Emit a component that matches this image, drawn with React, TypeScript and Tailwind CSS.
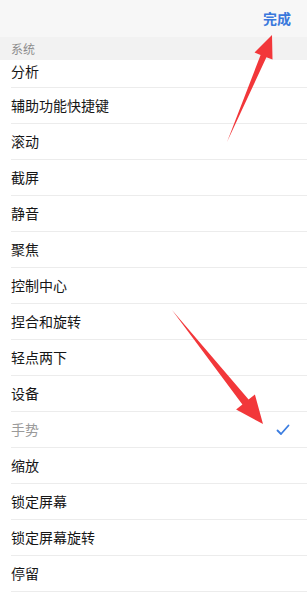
import React from "react";

const items = [
  "辅助功能快捷键",
  "滚动",
  "截屏",
  "静音",
  "聚焦",
  "控制中心",
  "捏合和旋转",
  "轻点两下",
  "设备",
  "手势",
  "缩放",
  "锁定屏幕",
  "锁定屏幕旋转",
  "停留",
];

const Check = () => (
  <svg width="14" height="12" viewBox="0 0 14 12" className="mr-[17px]">
    <polyline points="1.5,6.5 5,10 12.5,1.5" fill="none" stroke="#3b7de0" strokeWidth="1.8" strokeLinecap="round" strokeLinejoin="round" />
  </svg>
);

const Row: React.FC<{ label: string; selected?: boolean }> = ({ label, selected }) => (
  <div className="bg-white pl-[11px]">
    <div className="h-9 flex items-center justify-between border-b border-[#ececec]">
      <span className={`text-[14px] ${selected ? "text-[#9a9a9a]" : "text-[#161616]"}`}>{label}</span>
      {selected && <Check />}
    </div>
  </div>
);

export default function App() {
  return (
    <div
      className="relative w-[307px] h-[600px] overflow-hidden bg-white"
      style={{ fontFamily: '"Noto Sans CJK SC", "Noto Sans", sans-serif' }}
    >
      <div className="h-[37px] bg-[#f7f7f7] flex items-center justify-end pr-4">
        <span className="text-[14px] font-bold text-[#3a78dc]">完成</span>
      </div>
      <div className="h-[23px] bg-[#f2f2f2] flex items-center pl-[11px]">
        <span className="text-[12px] text-[#8c8c8c]">系统</span>
      </div>
      <div className="bg-white pl-[11px]">
        <div className="h-7 leading-5 border-b border-[#ececec]">
          <span className="text-[14px] text-[#161616]">分析</span>
        </div>
      </div>
      {items.map((label) => (
        <Row key={label} label={label} selected={label === "手势"} />
      ))}

      <svg className="absolute inset-0 pointer-events-none" width="307" height="600" viewBox="0 0 307 600">
        <polygon
          points="227,142 260.6,55 254.5,52.5 272,35 272.5,59.5 266.4,57.3"
          fill="#f2373a"
        />
        <polygon
          points="172,310 248.6,399.6 254.9,394.5 263,424 236.1,409.6 242.4,404.6"
          fill="#f2373a"
        />
      </svg>
    </div>
  );
}
